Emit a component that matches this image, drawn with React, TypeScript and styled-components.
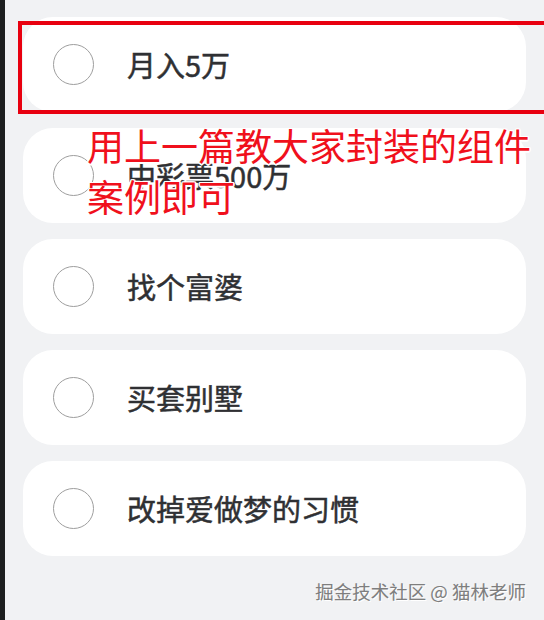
import React from "react";
import styled, { createGlobalStyle } from "styled-components";

const GlobalStyle = createGlobalStyle`
  html, body {
    margin: 0;
    padding: 0;
    background: #f1f2f4;
  }
  body {
    font-family: "Noto Sans CJK SC", "Noto Sans", sans-serif;
  }
`;

const Page = styled.div`
  display: flex;
  width: 544px;
  height: 620px;
  overflow: hidden;
  background: #f1f2f4;
`;

const EdgeStrip = styled.div`
  width: 5px;
  flex: none;
  background: #1d1f1f;
`;

const Main = styled.main`
  position: relative;
  flex: 1;
  display: flex;
  flex-direction: column;
  padding: 17px 18px 0 18px;
`;

const OptionList = styled.div`
  display: flex;
  flex-direction: column;
  gap: 16px;
`;

const OptionCard = styled.label`
  display: flex;
  align-items: center;
  gap: 33px;
  height: 95px;
  padding-left: 30px;
  box-sizing: border-box;
  background: #ffffff;
  border-radius: 30px;
`;

const Radio = styled.span`
  width: 41px;
  height: 41px;
  box-sizing: border-box;
  border-radius: 50%;
  border: 1.5px solid #9e9e9e;
  flex: none;
`;

const OptionText = styled.span`
  font-size: 29px;
  font-weight: 400;
  color: #2f3033;
  line-height: 1;
  -webkit-text-stroke: 0.5px #2f3033;
`;

const Footer = styled.div`
  margin-top: 23px;
  text-align: right;
  font-size: 18.5px;
  line-height: 24px;
  color: #7e7e7e;
  text-shadow: 1px 1px 0 #ffffff, -0.5px -0.5px 0 rgba(0, 0, 0, 0.12);
`;

const HighlightBox = styled.div`
  position: absolute;
  left: 13px;
  top: 21px;
  width: 530px;
  height: 93px;
  box-sizing: border-box;
  border: 4px solid #e8000f;
  pointer-events: none;
`;

const Caption = styled.div`
  position: absolute;
  left: 82px;
  top: 120px;
  font-size: 37px;
  line-height: 51px;
  color: #f0101c;
  white-space: nowrap;
  text-shadow:
    1.5px 0 0 #fff, -1.5px 0 0 #fff, 0 1.5px 0 #fff, 0 -1.5px 0 #fff,
    1px 1px 0 #fff, -1px -1px 0 #fff, 1px -1px 0 #fff, -1px 1px 0 #fff;
  pointer-events: none;
`;

const options = ["月入5万", "中彩票500万", "找个富婆", "买套别墅", "改掉爱做梦的习惯"];

export default function App() {
  return (
    <>
      <GlobalStyle />
      <Page>
        <EdgeStrip />
        <Main>
          <OptionList>
            {options.map((o) => (
              <OptionCard key={o}>
                <Radio />
                <OptionText>{o}</OptionText>
              </OptionCard>
            ))}
          </OptionList>
          <Footer>掘金技术社区 @ 猫林老师</Footer>
          <HighlightBox />
          <Caption>
            用上一篇教大家封装的组件
            <br />
            案例即可
          </Caption>
        </Main>
      </Page>
    </>
  );
}
